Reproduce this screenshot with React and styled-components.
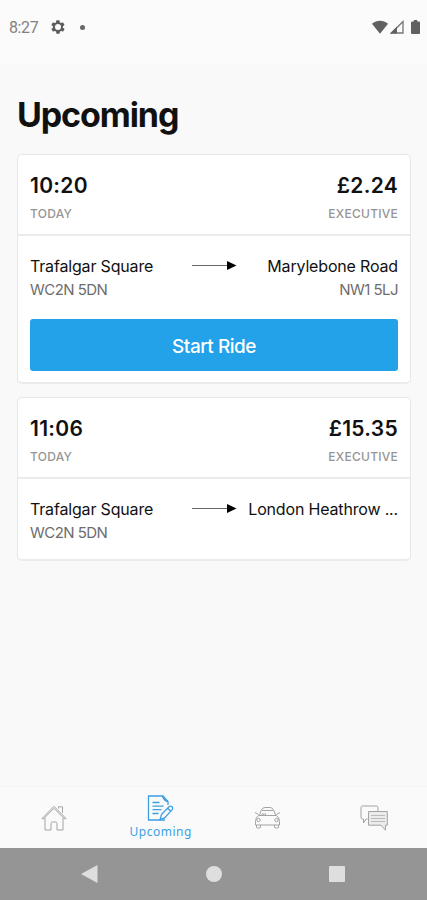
import React from 'react';
import styled, { createGlobalStyle } from 'styled-components';

const rides = [
    {
        time: '10:20',
        day: 'TODAY',
        price: '£2.24',
        type: 'EXECUTIVE',
        from: 'Trafalgar Square',
        fromCode: 'WC2N 5DN',
        to: 'Marylebone Road',
        toCode: 'NW1 5LJ',
        ready: true,
    },
    {
        time: '11:06',
        day: 'TODAY',
        price: '£15.35',
        type: 'EXECUTIVE',
        from: 'Trafalgar Square',
        fromCode: 'WC2N 5DN',
        to: 'London Heathrow ...',
        toCode: '',
        ready: false,
    },
];

const GearIcon = () => (
    <svg width="16" height="16" viewBox="0 0 24 24" fill="#5c5c5c">
        <path
            fillRule="evenodd"
            d="M19.4 13a7.8 7.8 0 0 0 0-2l2.1-1.6c.2-.2.2-.4.1-.6l-2-3.5c-.1-.2-.4-.3-.6-.2l-2.5 1a7.3 7.3 0 0 0-1.7-1l-.4-2.6a.5.5 0 0 0-.5-.5h-4a.5.5 0 0 0-.5.5L9 5.1a7.7 7.7 0 0 0-1.7 1l-2.5-1c-.2-.1-.5 0-.6.2l-2 3.5c-.1.2-.1.5.1.6L4.5 11a7.8 7.8 0 0 0 0 2l-2.1 1.6c-.2.2-.2.4-.1.6l2 3.5c.1.2.4.3.6.2l2.5-1a7.3 7.3 0 0 0 1.7 1l.4 2.6c0 .3.2.5.5.5h4c.3 0 .5-.2.5-.5l.4-2.6a7.7 7.7 0 0 0 1.7-1l2.5 1c.2.1.5 0 .6-.2l2-3.5c.1-.2.1-.5-.1-.6zM12 16.5a4.5 4.5 0 1 1 0-9 4.5 4.5 0 0 1 0 9z"
        />
    </svg>
);

const WifiIcon = () => (
    <svg width="16" height="14" viewBox="0 0 16 14" fill="#616161">
        <path d="M0 3.7C4.7-.4 11.3-.4 16 3.7L8 13.7z" />
    </svg>
);

const SignalIcon = () => (
    <svg width="14" height="14" viewBox="0 0 14 14">
        <path d="M1.5 13L13 1.5V13z" fill="none" stroke="#747474" strokeWidth="1.3" />
        <path d="M0 13.6L7 6.6V13.6z" fill="#616161" />
    </svg>
);

const BatteryIcon = () => (
    <svg width="9" height="14" viewBox="0 0 9 14" fill="#616161">
        <path d="M2.8 0h3.4v1.4H8q1 0 1 1V13q0 1-1 1H1q-1 0-1-1V2.4q0-1 1-1h1.8z" />
    </svg>
);

const ArrowIcon = () => (
    <svg width="45" height="10" viewBox="0 0 45 10">
        <path d="M0 4.5h36" stroke="#686868" strokeWidth="1.2" />
        <path d="M35 0L44.5 4.5l-9.5 4.5z" fill="#000" />
    </svg>
);

const HomeIcon = () => (
    <svg width="26" height="26" viewBox="0 0 26 26" fill="none" stroke="#a3a3a3" strokeWidth="1">
        <path d="M1 13.5L13 1.3l12 12.2-1.3.5L13 3.3 2.3 14z" />
        <path d="M4 13v12h6v-6.5q0-1.5 1.5-1.5h3q1.5 0 1.5 1.5V25h6V13" />
        <path d="M17.5 3.5V1.8h4v6" />
    </svg>
);

const NoteIcon = () => (
    <svg width="27" height="26" viewBox="0 0 27 26" fill="none" stroke="#3c9fe2" strokeWidth="1.3">
        <path d="M21 10V6.500L16 1H1.500v24h16.500" />
        <path d="M15.500 1q1 4.500 5.500 5.500M5.500 7.500h7M5.500 11.200h11M5.500 14.700h9M5.500 18.500h6" />
        <path d="M14.500 19.500l7.700-8q1.500-1 2.800.2t.2 2.900l-7.700 8.300-4.500 1.700zM20.500 13l3.200 3.300" />
    </svg>
);

const CarIcon = () => (
    <svg width="27" height="24" viewBox="0 0 27 24" fill="none" stroke="#a3a3a3" strokeWidth="1">
        <path d="M5.500 9l1.700-4.500Q8.200 1.500 11 1.500h5q2.800 0 3.800 3L21.500 9" />
        <path d="M8 4.500h11M4.500 8.500L1 6.500M22.500 8.500L26 6.500" />
        <path d="M4.500 9.500h18q3 2 3 6v3.500h-24v-3.500q0-4 3-6z" />
        <path d="M2.500 19v2.500q1.500 1.500 4 0V19M20.500 19v2.500q2.500 1.500 4 0V19M7.500 9.500l1-2 1.500 1 1-1 1 2" />
        <circle cx="4.500" cy="14" r="1.700" />
        <circle cx="22.500" cy="14" r="1.700" />
    </svg>
);

const ChatIcon = () => (
    <svg width="28" height="26" viewBox="0 0 28 26" fill="none" stroke="#a3a3a3" strokeWidth="1">
        <path d="M7.500 14H6l-2.500 4V14H2.500Q1 14 1 12.500v-10Q1 1 2.500 1h14Q18 1 18 2.500V6" />
        <path d="M8.500 6.500h18.800v13.700H25.500v5l-4.500-5H8.500z" fill="#ececec" />
        <path d="M11 10.500h14M11 13.500h14M11 16.500h14" stroke="#bbb" />
    </svg>
);

const tabs = [
    { name: 'Home', Icon: HomeIcon },
    { name: 'Upcoming', Icon: NoteIcon, active: true },
    { name: 'Rides', Icon: CarIcon },
    { name: 'Messages', Icon: ChatIcon },
];

const RideCard = ({ ride }) => (
    <Card>
        <CardHeader>
            <Column>
                <Heading>{ride.time}</Heading>
                <Label>{ride.day}</Label>
            </Column>
            <Column $right>
                <Heading>{ride.price}</Heading>
                <Label>{ride.type}</Label>
            </Column>
        </CardHeader>
        <Route>
            <Column>
                <Place>{ride.from}</Place>
                <Postcode>{ride.fromCode}</Postcode>
            </Column>
            <ArrowHolder>
                <ArrowIcon />
            </ArrowHolder>
            <Column $right>
                <Place>{ride.to}</Place>
                <Postcode>{ride.toCode}</Postcode>
            </Column>
        </Route>
        {ride.ready && <StartButton>Start Ride</StartButton>}
    </Card>
);

const App = () => {
    return (
        <Screen>
            <GlobalStyle />
            <StatusBar>
                <Clock>8:27</Clock>
                <GearIcon />
                <Dot />
                <StatusIcons>
                    <WifiIcon />
                    <SignalIcon />
                    <BatteryIcon />
                </StatusIcons>
            </StatusBar>
            <Content>
                <Title>Upcoming</Title>
                {rides.map((ride) => (
                    <RideCard key={ride.time} ride={ride} />
                ))}
            </Content>
            <TabBar>
                {tabs.map(({ name, Icon, active }) => (
                    <Tab key={name} aria-label={name}>
                        <Icon />
                        {active && <TabLabel>{name}</TabLabel>}
                    </Tab>
                ))}
            </TabBar>
            <SystemBar>
                <svg width="17" height="18" viewBox="0 0 17 18" fill="#dedede">
                    <path d="M16.5 0v18L0 9z" />
                </svg>
                <HomeButton />
                <RecentButton />
            </SystemBar>
        </Screen>
    );
};

export default App;

const GlobalStyle = createGlobalStyle`
    * {
        box-sizing: border-box;
    }

    body {
        margin: 0;
        background-color: #f9f9f9;
    }

    svg {
        display: block;
        flex-shrink: 0;
    }
`;

const Screen = styled.div`
    display: flex;
    flex-direction: column;
    height: 900px;
    background-color: #f9f9f9;
    font-family: Inter, 'Liberation Sans', sans-serif;
    color: #111;
    overflow: hidden;
`;

const StatusBar = styled.header`
    display: flex;
    align-items: center;
    height: 64px;
    padding: 0 7px 10px 9px;
    background-color: #fbfbfb;
`;

const Clock = styled.span`
    width: 41px;
    padding-top: 1px;
    font-family: Roboto, sans-serif;
    font-size: 16px;
    letter-spacing: -0.4px;
    color: #828282;
`;

const Dot = styled.span`
    width: 5px;
    height: 5px;
    margin-left: 14px;
    border-radius: 50%;
    background-color: #686868;
`;

const StatusIcons = styled.div`
    display: flex;
    align-items: center;
    gap: 2px;
    margin-left: auto;

    svg:last-child {
        margin-left: 5px;
    }
`;

const Content = styled.main`
    flex: 1;
    padding: 30px 16px 0 17px;
`;

const Title = styled.h1`
    margin: 0 0 18px;
    font-size: 34px;
    line-height: 42px;
    font-weight: 700;
    letter-spacing: -1.1px;
`;

const Card = styled.section`
    margin-bottom: 13px;
    padding-bottom: 11px;
    border: 1px solid #e7e7e7;
    border-bottom: 2px solid #ebebeb;
    border-radius: 5px;
    background-color: #fff;
`;

const CardHeader = styled.div`
    display: flex;
    justify-content: space-between;
    height: 81px;
    padding: 17px 12px 0;
    border-bottom: 2px solid #ebebeb;
`;

const Column = styled.div`
    display: flex;
    flex-direction: column;
    white-space: nowrap;
    align-items: ${({ $right }) => ($right ? 'flex-end' : 'flex-start')};
`;

const Heading = styled.span`
    font-size: 21px;
    line-height: 28px;
    font-weight: 600;
    letter-spacing: 0.3px;
`;

const Label = styled.span`
    margin-top: 4px;
    font-size: 12px;
    line-height: 19px;
    font-weight: 500;
    letter-spacing: 0.25px;
    color: #959595;
`;

const Route = styled.div`
    display: grid;
    grid-template-columns: 162px 45px 1fr;
    height: 69px;
    padding: 18px 12px 0;
`;

const ArrowHolder = styled.div`
    padding-top: 7px;
`;

const Place = styled.span`
    font-size: 16px;
    line-height: 24px;
    letter-spacing: -0.17px;
`;

const Postcode = styled.span`
    font-size: 15px;
    line-height: 24px;
    letter-spacing: -0.55px;
    color: #6d6d6d;
`;

const StartButton = styled.button`
    display: block;
    width: calc(100% - 24px);
    height: 52px;
    margin: 14px 12px 0;
    padding: 2px 0 0;
    border: none;
    border-radius: 3px;
    background-color: #23a1e9;
    font-family: inherit;
    font-size: 19px;
    font-weight: 500;
    letter-spacing: -0.5px;
    color: #fff;
`;

const TabBar = styled.nav`
    display: grid;
    grid-template-columns: repeat(4, 1fr);
    height: 62px;
    padding-left: 1px;
    border-top: 1px solid #f5f5f5;
    background-color: #fafafa;
`;

const Tab = styled.div`
    display: flex;
    flex-direction: column;
    align-items: center;
    justify-content: center;
`;

const TabLabel = styled.span`
    margin-top: 3px;
    font-family: 'Noto Sans', sans-serif;
    font-size: 12px;
    line-height: 16px;
    letter-spacing: 0.5px;
    color: #3c9fe2;
`;

const SystemBar = styled.footer`
    display: flex;
    align-items: center;
    justify-content: space-between;
    height: 52px;
    padding: 0 82px 0 81px;
    background-color: #959595;
`;

const HomeButton = styled.span`
    width: 16px;
    height: 16px;
    border-radius: 50%;
    background-color: #dedede;
`;

const RecentButton = styled.span`
    width: 16px;
    height: 16px;
    border-radius: 1px;
    background-color: #dedede;
`;
